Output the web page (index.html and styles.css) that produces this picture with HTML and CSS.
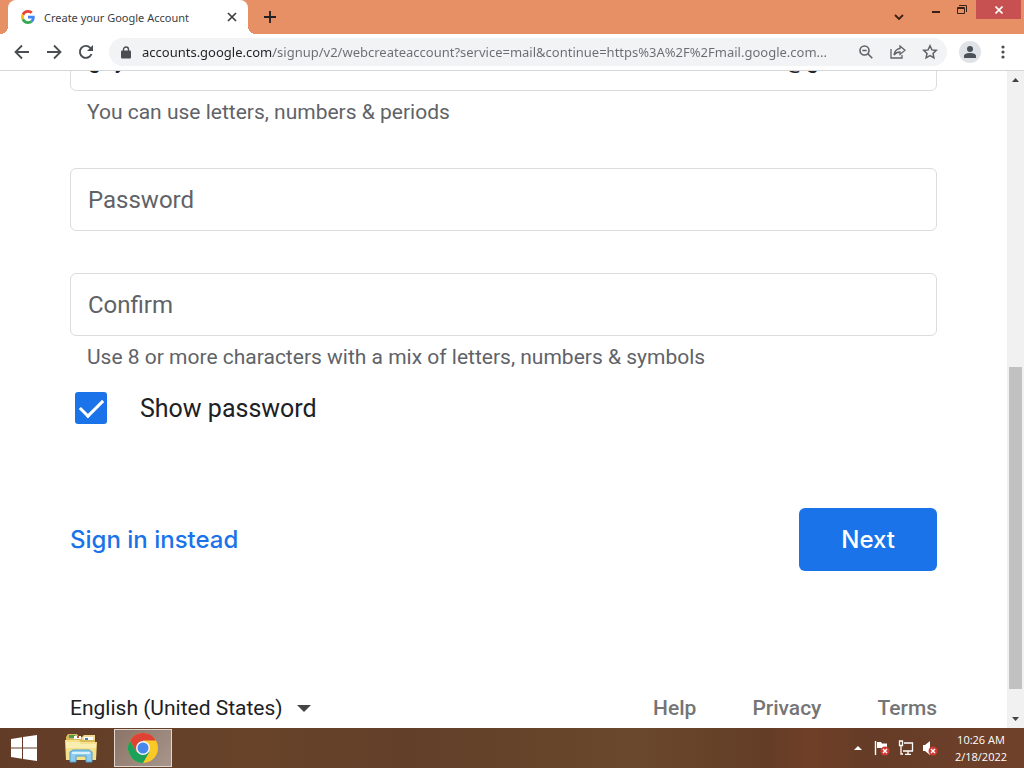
FILE: index.html
```html
<!DOCTYPE html>
<html lang="en">
<head>
    <meta charset="UTF-8">
    <meta name="viewport" content="width=device-width, initial-scale=1.0">
    <title>Create your Google Account</title>
    <link rel="stylesheet" href="styles.css">
</head>
<body>

    <!-- Tab strip -->
    <header class="titlebar">
        <div class="tab">
            <svg class="tab-icon" width="14" height="14" viewBox="0 0 48 48">
                <path fill="#EA4335" d="M24 9.5c3.5 0 6.700 1.200 9.200 3.600l6.900-6.900C35.900 2.400 30.500 0 24 0 14.600 0 6.500 5.400 2.600 13.200l8 6.200C12.400 13.700 17.700 9.500 24 9.500z"/>
                <path fill="#4285F4" d="M47 24.600c0-1.600-.2-3.100-.4-4.600H24v9h12.900c-.6 3-2.200 5.500-4.700 7.200l7.700 6C44.400 38 47 31.800 47 24.600z"/>
                <path fill="#FBBC05" d="M10.500 28.600c-.5-1.500-.8-3-.8-4.600s.3-3.100.8-4.600l-8-6.200C.9 16.500 0 20.100 0 24s.9 7.500 2.600 10.800l7.900-6.200z"/>
                <path fill="#34A853" d="M24 48c6.500 0 11.900-2.100 15.900-5.800l-7.700-6c-2.200 1.400-4.900 2.300-8.200 2.300-6.300 0-11.600-4.200-13.500-9.900l-8 6.200C6.500 42.600 14.600 48 24 48z"/>
            </svg>
            <span class="tab-title">Create your Google Account</span>
            <button class="icon-btn" aria-label="Close tab">
                <svg width="10" height="10" viewBox="0 0 10 10"><path d="M1 1l8 8M9 1L1 9" stroke="#3c4043" stroke-width="1.700"/></svg>
            </button>
        </div>
        <button class="icon-btn new-tab" aria-label="New tab">
            <svg width="12" height="12" viewBox="0 0 12 12"><path d="M6 0v12M0 6h12" stroke="#202124" stroke-width="1.800"/></svg>
        </button>
        <div class="window-controls">
            <button class="tab-search" aria-label="Search tabs">
                <svg width="10" height="7" viewBox="0 0 10 7"><path d="M1 1l4 4 4-4" fill="none" stroke="#3a2014" stroke-width="1.800"/></svg>
            </button>
            <button class="win-btn" aria-label="Minimize">
                <svg width="10" height="10" viewBox="0 0 10 10"><path d="M1 7h8" stroke="#3a2014" stroke-width="2"/></svg>
            </button>
            <button class="win-btn" aria-label="Restore">
                <svg width="11" height="11" viewBox="0 0 11 11" fill="none" stroke="#3a2014"><path d="M.5 3.500h7v6h-7zM.5 4.500h7M2.500 1.500h7v6.500M2.500 1v1"/></svg>
            </button>
            <button class="win-btn win-close" aria-label="Close">
                <svg width="8" height="8" viewBox="0 0 8 8"><path d="M.5.5l7 7M7.500.5l-7 7" stroke="#fff" stroke-width="1.600"/></svg>
            </button>
        </div>
    </header>

    <!-- Address bar -->
    <nav class="toolbar">
        <button class="icon-btn" aria-label="Back">
            <svg width="16" height="16" viewBox="0 0 16 16" fill="none" stroke="#4a4d51" stroke-width="1.800"><path d="M15 8H2M8 1.500L1.500 8 8 14.500"/></svg>
        </button>
        <button class="icon-btn" aria-label="Forward">
            <svg width="16" height="16" viewBox="0 0 16 16" fill="none" stroke="#4a4d51" stroke-width="1.800"><path d="M1 8h13M8 1.500L14.500 8 8 14.500"/></svg>
        </button>
        <button class="icon-btn" aria-label="Reload">
            <svg width="16" height="16" viewBox="0 0 16 16"><path d="M13.500 10A6 6 0 1 1 12.300 3.800L14 5.500" fill="none" stroke="#4a4d51" stroke-width="1.900"/><path d="M15 1v6H9z" fill="#4a4d51"/></svg>
        </button>
        <div class="address">
            <svg width="10" height="13" viewBox="0 0 10 13"><rect y="4.500" width="10" height="8" rx="1" fill="#4a4d51"/><path d="M2.500 5V3.500a2.500 2.500 0 0 1 5 0V5" fill="none" stroke="#4a4d51" stroke-width="1.400"/></svg>
            <input type="text" class="url" aria-label="Address" value="accounts.google.com/signup/v2/webcreateaccount?service=mail&amp;continue=https%3A%2F%2Fmail.google.com...">
            <button class="icon-btn" aria-label="Zoom">
                <svg width="14" height="14" viewBox="0 0 14 14" fill="none" stroke="#5f6368" stroke-width="1.600"><circle cx="5.500" cy="5.500" r="4.500"/><path d="M8.800 8.800L13.300 13.300M3.300 5.500h4.400"/></svg>
            </button>
            <button class="icon-btn" aria-label="Share">
                <svg width="16" height="14" viewBox="0 0 16 14" fill="none" stroke="#5f6368" stroke-width="1.300"><path d="M1 4v9h11v-3M10 1l5 4.200-5 4.200V7C7.500 7 5.500 8 4 10c.5-3.500 2.500-6 6-6.500z"/></svg>
            </button>
            <button class="icon-btn" aria-label="Bookmark">
                <svg width="16" height="16" viewBox="0 0 16 16" fill="none" stroke="#5f6368" stroke-width="1.500"><path d="M8 1.800l1.900 4.100 4.400.5-3.300 3 .9 4.400L8 11.600l-3.900 2.200.9-4.400-3.300-3 4.400-.5z"/></svg>
            </button>
        </div>
        <button class="avatar" aria-label="Profile">
            <svg width="14" height="14" viewBox="0 0 14 14" fill="#4a5158"><circle cx="7" cy="4" r="3"/><path d="M1 13v-2c0-2.200 3.500-3 6-3s6 .8 6 3v2z"/></svg>
        </button>
        <button class="icon-btn" aria-label="Menu">
            <svg width="4" height="14" viewBox="0 0 4 14" fill="#4a4d51"><circle cx="2" cy="2" r="1.600"/><circle cx="2" cy="7" r="1.600"/><circle cx="2" cy="12" r="1.600"/></svg>
        </button>
    </nav>

    <div class="viewport">
        <!-- scrolled to the bottom, the username field sits half under the toolbar -->
        <main class="page">
            <form class="signup-form">
                <div class="field username">
                    <input type="text" class="text-input" aria-label="Username" value="guy">
                    <span class="suffix">@gmail.com</span>
                </div>
                <p class="hint">You can use letters, numbers &amp; periods</p>

                <div class="field password">
                    <input type="text" class="text-input" id="password">
                    <label for="password">Password</label>
                </div>
                <div class="field confirm">
                    <input type="text" class="text-input" id="confirm">
                    <label for="confirm">Confirm</label>
                </div>
                <p class="hint">Use 8 or more characters with a mix of letters, numbers &amp; symbols</p>

                <div class="show-password">
                    <input type="checkbox" id="show" checked>
                    <label for="show">Show password</label>
                </div>

                <div class="actions">
                    <a href="#" class="signin">Sign in instead</a>
                    <button type="submit" class="next">Next</button>
                </div>
            </form>

            <footer class="footer">
                <div class="language">
                    <select aria-label="Language">
                        <option>English (United States)</option>
                    </select>
                    <svg width="14" height="7" viewBox="0 0 14 7"><path d="M0 0h14L7 7z" fill="#444"/></svg>
                </div>
                <div class="links">
                    <a href="#">Help</a>
                    <a href="#">Privacy</a>
                    <a href="#">Terms</a>
                </div>
            </footer>
        </main>
        <div class="scrollbar">
            <svg width="7" height="4" viewBox="0 0 7 4"><path d="M0 4h7L3.500 0z" fill="#444"/></svg>
            <div class="track"><div class="thumb"></div></div>
            <svg width="7" height="4" viewBox="0 0 7 4"><path d="M0 0h7L3.500 4z" fill="#444"/></svg>
        </div>
    </div>

    <!-- Windows taskbar -->
    <div class="taskbar">
        <button class="task" aria-label="Start">
            <svg width="26" height="26" viewBox="0 0 26 26" fill="#fff"><path d="M0 4l11-1.700v10.200H0zM12 2.100L26 0v12.500H12zM0 13.500h11v10.200L0 22zM12 13.500h14V26l-14-2.100z"/></svg>
        </button>
        <button class="task" aria-label="File Explorer">
            <svg width="32" height="30" viewBox="0 0 32 30">
                <path d="M1 4l2-3h9l2 3h16v21H1z" fill="#d9b95c"/>
                <path d="M4 2h6v3H4z" fill="#4f9a4f"/>
                <path d="M9 3h7v3H9z" fill="#fff"/>
                <path d="M12 3h2v2h-2z" fill="#c0522d"/>
                <path d="M17 4l2-2h11v5H17z" fill="#f0dc90"/>
                <path d="M19 4h9v3h-9z" fill="#fff"/>
                <path d="M20 5h3v2h-3z" fill="#3c7fc0"/>
                <path d="M0 7h14l2 2h16l-1 18H1z" fill="#f5e08c"/>
                <path d="M1 9h13l2 2h15v4H1z" fill="#faedb0"/>
                <path d="M5 29V19l3-2h16l3 2v10h-6v-6H11v6z" fill="#8fcdf0" stroke="#4a9fd0"/>
                <path d="M7 20h18" stroke="#d8f1fc" stroke-width="2"/>
            </svg>
        </button>
        <button class="task active" aria-label="Google Chrome">
            <svg width="30" height="30" viewBox="0 0 30 30">
                <circle cx="15" cy="15" r="15" fill="#fbc926"/>
                <path d="M15 15L2 7.500A15 15 0 0 1 28 7.500H15z" fill="#dd4235"/>
                <path d="M2 7.500A15 15 0 0 0 15 30l6.500-11.300L15 15l-6.500 3.700z" fill="#1da05a"/>
                <path d="M2 7.500l6.500 11.200L15 7.500z" fill="#dd4235"/>
                <circle cx="15" cy="15" r="7" fill="#f5f5f5"/>
                <circle cx="15" cy="15" r="5.500" fill="#4787ec"/>
            </svg>
        </button>
        <div class="tray">
            <svg width="16" height="4" viewBox="0 0 16 4"><path d="M4 4h8L8 0z" fill="#fff"/></svg>
            <svg width="16" height="16" viewBox="0 0 16 16"><path d="M1.500 1v14" stroke="#fff" stroke-width="1.400"/><path d="M3 2h4l1 1.500h5V9H8L7 8H3z" fill="#fff"/><circle cx="11" cy="11" r="4.500" fill="#d03a32"/><path d="M9 9l4 4M13 9l-4 4" stroke="#fff" stroke-width="1.400"/></svg>
            <svg width="16" height="16" viewBox="0 0 16 16" fill="none" stroke="#fff" stroke-width="1.300"><path d="M6 3h8.500v8H5M10 11v3M7 14.300h6M3 6v8h2M1.500 1h3v4.500h-3z"/></svg>
            <svg width="16" height="16" viewBox="0 0 16 16"><path d="M1 5h2l5-4v14l-5-4H1z" fill="#fff"/><circle cx="11" cy="11" r="4.500" fill="#d03a32"/><path d="M9 9l4 4M13 9l-4 4" stroke="#fff" stroke-width="1.400"/></svg>
        </div>
        <div class="clock">
            <div>10:26 AM</div>
            <div>2/18/2022</div>
        </div>
    </div>

</body>
</html>
```

FILE: styles.css
```css
* {
    margin: 0;
    padding: 0;
    box-sizing: border-box;
}

body {
    display: flex;
    flex-direction: column;
    height: 100vh;
    overflow: hidden;
    font-family: Roboto, sans-serif;
    background: #fff;
    color: #202124;
}

button {
    border: none;
    background: none;
    cursor: pointer;
}

svg {
    display: block;
    flex-shrink: 0;
}

a {
    text-decoration: none;
}

.icon-btn {
    display: flex;
    align-items: center;
    justify-content: center;
    width: 16px;
    height: 16px;
    flex-shrink: 0;
}

/* Tab strip */
.titlebar {
    display: flex;
    align-items: flex-start;
    height: 34px;
    padding-left: 8px;
    background: #e78f65;
}

.tab {
    position: relative;
    display: flex;
    align-items: center;
    width: 240px;
    height: 34px;
    padding: 0 8px 0 13px;
    background: #fff;
    border-radius: 8px 8px 0 0;
}

/* the curved feet of the tab */
.tab::before,
.tab::after {
    content: "";
    position: absolute;
    bottom: 0;
    width: 8px;
    height: 8px;
}

.tab::before {
    left: -8px;
    background: radial-gradient(circle at 0 0, transparent 8px, #fff 8px);
}

.tab::after {
    right: -8px;
    background: radial-gradient(circle at 100% 0, transparent 8px, #fff 8px);
}

.tab-title {
    flex: 1;
    margin-left: 9px;
    font: 11px "Noto Sans", sans-serif;
    color: #3c4043;
    white-space: nowrap;
}

.new-tab {
    margin: 9px 0 0 14px;
}

.window-controls {
    display: flex;
    margin-left: auto;
    padding-right: 3px;
}

.tab-search {
    display: flex;
    align-items: center;
    justify-content: center;
    width: 30px;
    height: 34px;
    margin-right: 8px;
}

.win-btn {
    display: flex;
    align-items: center;
    justify-content: center;
    width: 27px;
    height: 19px;
}

.win-close {
    width: 45px;
    background: #c75050;
}

/* Address bar */
.toolbar {
    display: flex;
    align-items: center;
    gap: 16px;
    height: 37px;
    padding: 0 13px 0 14px;
    background: #fff;
    border-bottom: 1px solid #d5d6d8;
}

.address {
    display: flex;
    align-items: center;
    flex: 1;
    gap: 16px;
    height: 28px;
    padding: 0 12px;
    margin: 0 -4px 0 -1px;
    padding-right: 9px;
    border-radius: 14px;
    background: #f1f3f4;
}

.url {
    flex: 1;
    min-width: 0;
    margin-left: -5px;
    border: none;
    outline: none;
    font: 13px "Noto Sans", sans-serif;
    /* dark host name, grey path */
    background: linear-gradient(90deg, #202124 131px, #696d72 131px);
    background-clip: text;
    -webkit-background-clip: text;
    color: transparent;
}

.avatar {
    display: flex;
    align-items: center;
    justify-content: center;
    width: 22px;
    height: 22px;
    margin-right: -2px;
    border-radius: 50%;
    background: #dfe3e7;
}

/* Page */
.viewport {
    display: flex;
    flex: 1;
    min-height: 0;
}

.page {
    display: flex;
    flex-direction: column;
    justify-content: flex-end;
    flex: 1;
    padding: 0 70px;
    overflow: hidden;
}

.field {
    position: relative;
    display: flex;
    align-items: center;
    height: 63px;
    border: 1px solid #dadce0;
    border-radius: 6px;
    font-size: 24px;
}

.field label {
    position: absolute;
    left: 17px;
    color: #5f6368;
}

.text-input {
    flex: 1;
    min-width: 0;
    height: 100%;
    padding: 0 17px;
    border: none;
    outline: none;
    background: none;
    font: inherit;
    color: #202124;
}

.suffix {
    padding-right: 17px;
}

.password {
    margin-top: 35px;
}

.confirm {
    margin-top: 42px;
}

.hint {
    padding-left: 17px;
    font-size: 21px;
    line-height: 42px;
    color: #5f6368;
}

.show-password {
    display: flex;
    align-items: center;
    gap: 33px;
    height: 60px;
    padding-left: 5px;
    font-size: 25px;
}

.show-password input {
    appearance: none;
    display: flex;
    justify-content: center;
    width: 32px;
    height: 32px;
    border-radius: 3px;
    border: 3px solid #5f6368;
}

.show-password input:checked {
    border: none;
    background: #1a73e8;
}

.show-password input:checked::before {
    content: "";
    width: 10px;
    height: 20px;
    margin-top: 2px;
    border: solid #fff;
    border-width: 0 3px 3px 0;
    transform: rotate(45deg);
}

.actions {
    display: flex;
    align-items: center;
    justify-content: space-between;
    margin-top: 70px;
    font: 500 24px Inter, sans-serif;
}

.signin {
    color: #1a73e8;
}

.next {
    height: 63px;
    padding: 0 42px;
    border-radius: 6px;
    background: #1a73e8;
    color: #fff;
    font: inherit;
}

.footer {
    display: flex;
    align-items: center;
    justify-content: space-between;
    flex-shrink: 0;
    height: 40px;
    margin-top: 117px;
    font-size: 21px;
}

.language {
    display: flex;
    align-items: center;
    gap: 14px;
}

.language select {
    appearance: none;
    border: none;
    background: none;
    font: inherit;
    color: #202124;
}

.links {
    display: flex;
    gap: 56px;
    font-weight: 500;
}

.links a {
    color: #757575;
}

.scrollbar {
    display: flex;
    flex-direction: column;
    align-items: center;
    width: 17px;
    padding: 7px 0;
    background: #f1f1f1;
}

.track {
    display: flex;
    flex-direction: column;
    justify-content: flex-end;
    flex: 1;
    width: 13px;
    padding-bottom: 28px;
}

.thumb {
    height: 53%;
    background: #c1c1c1;
}

/* Taskbar */
.taskbar {
    display: flex;
    align-items: center;
    height: 40px;
    background: linear-gradient(90deg, #623c27, #68432a 25%, #623f29 40%, #69482c 62%, #643d27 75%, #703f27 79%, #653c27 85%, #70412a);
    color: #fff;
}

.task {
    display: flex;
    align-items: center;
    justify-content: center;
    width: 48px;
    height: 38px;
}

.task + .task {
    width: 66px;
}

.task.active {
    width: 58px;
    border: 1px solid #e0d6d0;
    background: linear-gradient(135deg, #8b7467, #a8968c);
}

.tray {
    display: flex;
    align-items: center;
    gap: 8px;
    margin-left: auto;
}

.clock {
    width: 86px;
    font: 11px/17px "Open Sans", sans-serif;
    text-align: center;
}
```
